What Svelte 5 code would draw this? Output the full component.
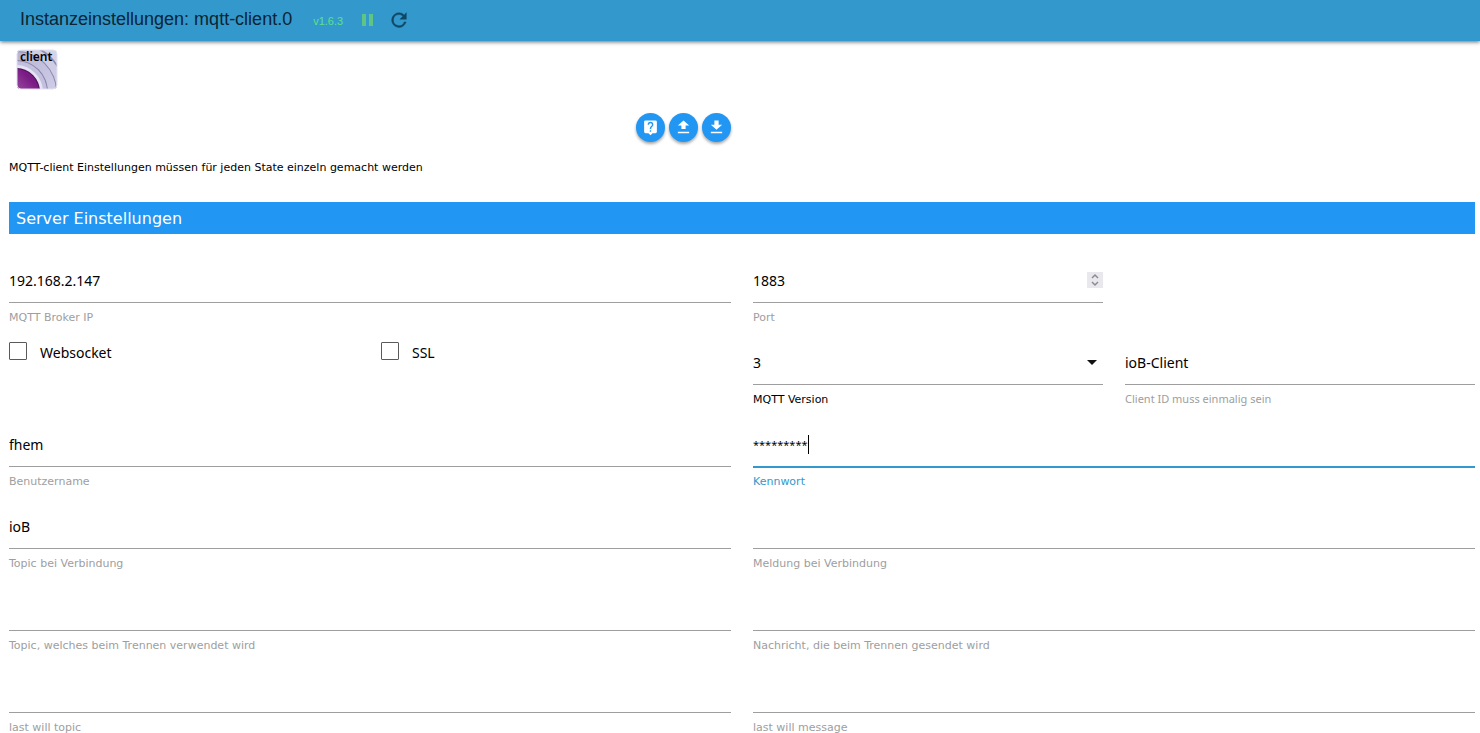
<script lang="ts">
    type Field = {
        id: string;
        label: string;
        value: string;
    };

    let broker = $state('192.168.2.147');
    let port = $state(1883);
    let websocket = $state(false);
    let ssl = $state(false);
    let version = $state('3');
    let clientId = $state('ioB-Client');
    let user = $state('fhem');
    let password = $state('*********');

    let messages = $state<Field[]>([
        { id: 'onConnectTopic', label: 'Topic bei Verbindung', value: 'ioB' },
        { id: 'onConnectMessage', label: 'Meldung bei Verbindung', value: '' },
        { id: 'onDisconnectTopic', label: 'Topic, welches beim Trennen verwendet wird', value: '' },
        { id: 'onDisconnectMessage', label: 'Nachricht, die beim Trennen gesendet wird', value: '' },
        { id: 'lastWillTopic', label: 'last will topic', value: '' },
        { id: 'lastWillMessage', label: 'last will message', value: '' }
    ]);
</script>

<div class="page">
    <header class="toolbar">
        <h1>Instanzeinstellungen: mqtt-client.0</h1>
        <span class="version">v1.6.3</span>
        <button class="pause" aria-label="Pause">
            <svg width="20" height="20" viewBox="0 0 20 20"><path d="M5 3h4v12H5zM12 3h4v12h-4z" fill="#5fc583" /></svg>
        </button>
        <button class="reload" aria-label="Neu laden">
            <svg width="22" height="22" viewBox="0 0 24 24"><path d="M17.65 5.35A7.96 7.96 0 0 0 12 3a8 8 0 1 0 7.73 10h-2.08A6 6 0 1 1 12 5c1.66 0 3.14.69 4.22 1.78L13 10h7V3z" fill="#0f4765" stroke="#0f4765" stroke-width=".5" /></svg>
        </button>
    </header>

    <main>
        <div class="logo">
            <svg width="42" height="42" viewBox="0 0 42 42">
                <defs>
                    <clipPath id="tile"><rect x="1" y="1" width="40" height="39" rx="4" /></clipPath>
                    <linearGradient id="core" x1="0" y1="1" x2="1" y2="0">
                        <stop offset="0.3" stop-color="#b070b4" />
                        <stop offset="0.8" stop-color="#7a1a84" />
                    </linearGradient>
                    <linearGradient id="ring" x1="0" y1="0" x2="1" y2="1">
                        <stop offset="0" stop-color="#aaa7cb" />
                        <stop offset="1" stop-color="#dcdaf0" />
                    </linearGradient>
                </defs>
                <g clip-path="url(#tile)">
                    <rect width="42" height="42" fill="#d5d3e8" />
                    <circle cx="0" cy="42" r="49" fill="#8f8cb0" />
                    <circle cx="0" cy="43" r="48" fill="#cfcde6" />
                    <circle cx="0" cy="43" r="41" fill="#8d8ab0" />
                    <circle cx="0" cy="43" r="40" fill="url(#ring)" />
                    <circle cx="0" cy="43" r="32" fill="#8683aa" />
                    <circle cx="0" cy="43" r="31" fill="#c3c0de" />
                    <circle cx="0" cy="43" r="27" fill="#e6e3f4" />
                    <circle cx="0" cy="43" r="24" fill="#4c1258" />
                    <circle cx="0" cy="43" r="23" fill="url(#core)" />
                </g>
                <rect x="1" y="1" width="40" height="39" rx="4" fill="none" stroke="#e3e1f2" />
                <text x="4" y="12">client</text>
            </svg>
        </div>

        <div class="actions">
            <button aria-label="Hilfe">
                <svg width="17" height="17" viewBox="0 0 24 24"><path d="M19 2H5a2 2 0 0 0-2 2v14c0 1.100.9 2 2 2h4l3 3 3-3h4a2 2 0 0 0 2-2V4a2 2 0 0 0-2-2zm-6 16h-2v-2h2zm2.070-7.750-.9.920C13.450 11.900 13 12.500 13 14h-2v-.5c0-1.100.45-2.100 1.170-2.830l1.240-1.260A2 2 0 1 0 10 8H8a4 4 0 0 1 8 0c0 .88-.36 1.680-.93 2.250z" fill="#fff" /></svg>
            </button>
            <button aria-label="Hochladen">
                <svg width="17" height="17" viewBox="0 0 24 24"><path d="M9 14h6v-5h5l-8-7-8 7h5zM4 18h16v2H4z" fill="#fff" /></svg>
            </button>
            <button aria-label="Herunterladen">
                <svg width="17" height="17" viewBox="0 0 24 24"><path d="M20 8h-5V2H9v6H4l8 7zM4 18v2h16v-2z" fill="#fff" /></svg>
            </button>
        </div>

        <p class="hint">MQTT-client Einstellungen müssen für jeden State einzeln gemacht werden</p>

        <h2>Server Einstellungen</h2>

        <form class="grid">
            <div class="field wide">
                <div class="line"><input id="broker" type="text" bind:value={broker} /></div>
                <label for="broker">MQTT Broker IP</label>
            </div>
            <div class="field port">
                <div class="line">
                    <input id="port" type="number" bind:value={port} />
                    <svg class="spin" width="16" height="16" viewBox="0 0 16 16"><path d="M5 6l3-3 3 3M5 10l3 3 3-3" fill="none" stroke="#8b8b93" stroke-width="1.5" /></svg>
                </div>
                <label for="port">Port</label>
            </div>

            <label class="check">
                <input type="checkbox" bind:checked={websocket} />
                <span>Websocket</span>
            </label>
            <label class="check">
                <input type="checkbox" bind:checked={ssl} />
                <span>SSL</span>
            </label>
            <div class="field dark">
                <div class="line">
                    <select id="version" bind:value={version}>
                        <option value="3">3</option>
                        <option value="4">4</option>
                    </select>
                    <svg class="arrow" width="10" height="6" viewBox="0 0 10 6"><path d="M0 1h10L5 6z" fill="#111" /></svg>
                </div>
                <label for="version">MQTT Version</label>
            </div>
            <div class="field">
                <div class="line"><input id="clientId" type="text" bind:value={clientId} /></div>
                <label class="narrow" for="clientId">Client ID muss einmalig sein</label>
            </div>

            <div class="field wide">
                <div class="line"><input id="user" type="text" bind:value={user} /></div>
                <label for="user">Benutzername</label>
            </div>
            <div class="field wide active">
                <div class="line">
                    <input id="password" type="text" autocomplete="off" bind:value={password} />
                    <span class="caret"></span>
                </div>
                <label for="password">Kennwort</label>
            </div>

            {#each messages as field (field.id)}
                <div class="field wide">
                    <div class="line"><input id={field.id} type="text" bind:value={field.value} /></div>
                    <label for={field.id}>{field.label}</label>
                </div>
            {/each}
        </form>
    </main>
</div>

<style>
    :global(body) {
        margin: 0;
        background: #fff;
    }

    .page {
        display: flex;
        flex-direction: column;
        height: 100vh;
        font-family: "DejaVu Sans", Verdana, sans-serif;
        color: #000;
    }

    button {
        display: flex;
        align-items: center;
        justify-content: center;
        padding: 0;
        border: none;
        background: none;
        cursor: pointer;
    }

    .toolbar {
        display: flex;
        flex: none;
        align-items: center;
        height: 41px;
        padding: 0 20px;
        box-sizing: border-box;
        background: #3399cc;
        box-shadow: 0 1px 4px rgba(0, 0, 0, 0.6);
        font-family: "Liberation Sans", Arial, sans-serif;
        z-index: 1;
    }

    h1 {
        margin: 0 21px 2px 0;
        font-size: 18px;
        font-weight: 400;
        color: #0c2433;
    }

    .version {
        margin-right: 14px;
        font-size: 11px;
        color: #5be08a;
    }

    .reload {
        margin-left: 11px;
    }

    main {
        flex: 1;
        min-height: 0;
        padding: 8px 5px 0 9px;
        overflow-y: auto;
        scrollbar-width: none;
    }

    .logo {
        height: 42px;
        padding-left: 7px;
    }

    .logo text {
        font: 600 12px "Noto Sans", sans-serif;
        fill: #000;
    }

    .actions {
        display: flex;
        justify-content: flex-end;
        gap: 4px;
        width: calc(50% - 11px);
        margin-top: 22px;
    }

    .actions button {
        width: 29px;
        height: 29px;
        border-radius: 50%;
        background: #2196f3;
        box-shadow: 0 2px 3px rgba(0, 0, 0, 0.35);
    }

    .hint {
        margin: 18px 0 26px;
        font-size: 11px;
        line-height: 16px;
    }

    h2 {
        margin: 0 0 26px;
        padding: 2px 7px 0;
        background: #2196f3;
        color: #fff;
        font-size: 16px;
        font-weight: 400;
        line-height: 30px;
    }

    .grid {
        display: grid;
        grid-template-columns: repeat(4, 1fr);
        grid-auto-rows: 82px;
        column-gap: 22px;
    }

    .field {
        min-width: 0;
    }

    .wide {
        grid-column: span 2;
    }

    .port {
        grid-column: 3 / 5;
        width: calc(50% - 11px);
    }

    .line {
        display: flex;
        align-items: center;
        height: 43px;
        padding-bottom: 2px;
        box-sizing: border-box;
        border-bottom: 1px solid #9e9e9e;
    }

    .line input,
    .line select {
        flex: 1;
        min-width: 0;
        height: 40px;
        padding: 0;
        border: none;
        outline: none;
        background: none;
        appearance: none;
        font-family: "Noto Sans", "Open Sans", sans-serif;
        font-size: 14px;
        color: #000;
    }

    .line input[type='number'] {
        appearance: textfield;
    }

    .field label {
        display: block;
        margin-top: 7px;
        font-size: 11px;
        line-height: 16px;
        color: #9e9e9e;
    }

    .field .narrow {
        margin-top: 6px;
        font-family: "Noto Sans", "Open Sans", sans-serif;
    }

    .dark label {
        color: #000;
    }

    .active .line {
        height: 44px;
        border-bottom: 2px solid #3399cc;
    }

    .active .line input {
        flex: none;
        field-sizing: content;
        font-size: 11px;
    }

    .active label {
        margin-top: 6px;
        color: #3399cc;
    }

    .caret {
        width: 1px;
        height: 19px;
        background: #000;
    }

    .spin {
        background: #e9e9ed;
    }

    .arrow {
        margin-right: 6px;
    }

    .check {
        display: flex;
        align-items: flex-start;
        gap: 13px;
        font-family: "Noto Sans", "Open Sans", sans-serif;
        font-size: 14px;
        line-height: 22px;
        cursor: pointer;
    }

    .check input {
        width: 18px;
        height: 18px;
        margin: 0;
        border: 1px solid #5a5a5a;
        border-radius: 1px;
        appearance: none;
    }

    .check input:checked {
        background: #2196f3;
    }
</style>
